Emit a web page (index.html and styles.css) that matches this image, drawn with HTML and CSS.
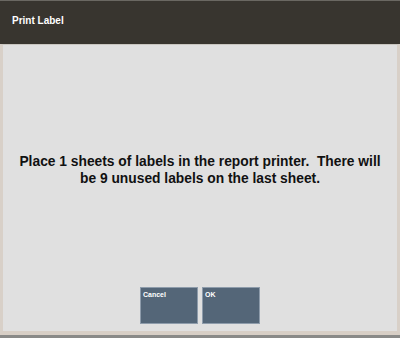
FILE: index.html
```html
<!DOCTYPE html>
<html>
<head>
<meta charset="utf-8">
<link rel="stylesheet" href="styles.css">
</head>
<body>
<div class="screen">
  <div class="header"><span class="title">Print Label</span></div>
  <div class="body">
    <div class="message">Place 1 sheets of labels in the report printer.&nbsp; There will be 9 unused labels on the last sheet.</div>
    <div class="buttons">
      <div class="btn">Cancel</div>
      <div class="btn">OK</div>
    </div>
  </div>
  <div class="footer"></div>
</div>
</body>
</html>
```
FILE: styles.css
```css
html, body {
  margin: 0;
  padding: 0;
}
body {
  width: 400px;
  height: 338px;
  overflow: hidden;
  font-family: "Liberation Sans", Arial, sans-serif;
  background: #8a8a88;
}
.screen {
  width: 400px;
  height: 338px;
  display: flex;
  flex-direction: column;
}
.header {
  height: 44px;
  background: #38352f;
  border-top: 1px solid #6a6862;
  box-sizing: border-box;
  padding: 14px 0 0 12px;
}
.title {
  display: block;
  color: #ffffff;
  font-weight: bold;
  font-size: 10px;
  line-height: 11px;
}
.body {
  flex: 1;
  background: #e0e0e0;
  border-top: 1px solid #c9c6c0;
  border-left: 3px solid #d8d0c8;
  border-right: 3px solid #d8d0c8;
  border-bottom: 4px solid #d8cfc6;
  display: flex;
  flex-direction: column;
  align-items: center;
}
.message {
  margin-top: 108px;
  width: 370px;
  text-align: center;
  font-weight: bold;
  font-size: 13.8px;
  line-height: 17px;
  color: #111111;
}
.buttons {
  margin-top: 100px;
  display: flex;
  gap: 4px;
}
.btn {
  width: 58px;
  height: 37px;
  background: #546678;
  border: 1px solid #8e9cab;
  color: #ffffff;
  font-weight: bold;
  font-size: 7px;
  line-height: 8px;
  padding: 3px 2px;
  box-sizing: border-box;
}
.footer {
  height: 3px;
  background: #8a8a88;
}
```
